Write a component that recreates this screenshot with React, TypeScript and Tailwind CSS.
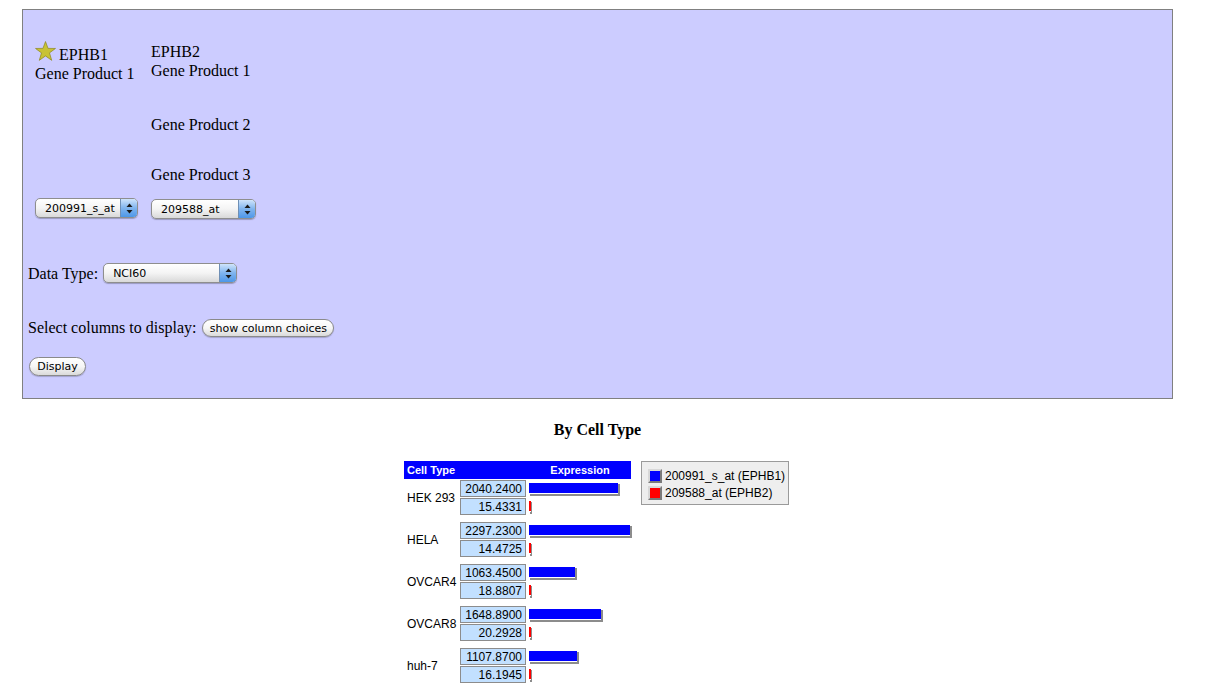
import React from "react";

const serif = { fontFamily: '"Liberation Serif", "Times New Roman", serif' };

function MacSelect({ width, label }: { width: number; label: string }) {
  return (
    <div
      className="relative flex h-[20px] items-center rounded-[5px] border border-[#8e8e8e] bg-linear-to-b from-white via-[#f4f4f4] to-[#d9d9d9] shadow-[0_1px_1px_rgba(0,0,0,0.25)]"
      style={{ width }}
    >
      <span className="pl-[9px] text-[11px] leading-none text-black" style={{ fontFamily: '"DejaVu Sans", sans-serif' }}>
        {label}
      </span>
      <div className="absolute right-0 top-0 bottom-0 flex w-[17px] items-center justify-center rounded-r-[4px] border-l border-[#6f8fb5] bg-linear-to-b from-[#cfe4fb] via-[#7fb4ee] to-[#4d97e8]">
        <svg width="7" height="11" viewBox="0 0 7 11">
          <path d="M3.5 0.5 L6.5 4 L0.5 4 Z" fill="#1a1a1a" />
          <path d="M3.5 10.5 L6.5 7 L0.5 7 Z" fill="#1a1a1a" />
        </svg>
      </div>
    </div>
  );
}

function MacButton({ label, width, className = "" }: { label: string; width: number; className?: string }) {
  return (
    <div
      className={`flex items-center justify-center rounded-full border border-[#8a8a8a] bg-linear-to-b from-white via-[#f6f6f6] to-[#dadada] text-[11px] leading-none text-black shadow-[0_1px_1px_rgba(0,0,0,0.2)] ${className}`}
      style={{ width, fontFamily: '"DejaVu Sans", sans-serif' }}
    >
      {label}
    </div>
  );
}

function Star() {
  return (
    <svg width="21" height="20" viewBox="0 0 20 19">
      <path
        d="M10 0.5 L12.4 7.0 L19.5 7.1 L13.8 11.3 L15.9 18.4 L10 14.2 L4.1 18.4 L6.2 11.3 L0.5 7.1 L7.6 7.0 Z"
        fill="#c8c235"
        stroke="#8f8a1e"
        strokeWidth="0.7"
        strokeLinejoin="round"
      />
    </svg>
  );
}

const rows = [
  { name: "HEK 293", a: "2040.2400", b: "15.4331" },
  { name: "HELA", a: "2297.2300", b: "14.4725" },
  { name: "OVCAR4", a: "1063.4500", b: "18.8807" },
  { name: "OVCAR8", a: "1648.8900", b: "20.2928" },
  { name: "huh-7", a: "1107.8700", b: "16.1945" },
];

function Bar({ value, color }: { value: number; color: string }) {
  const total = Math.round(value * 0.04484);
  const small = total < 4;
  const w = small ? 2 : total - 2;
  return (
    <div className="flex shrink-0 flex-col">
      <div className="flex">
        <div className="h-[10px] shrink-0" style={{ width: w, background: color }} />
        {small ? (
          <div className="mt-[1px] h-[10px] w-[1px] shrink-0 bg-[#8c8c8c]" />
        ) : (
          <div className="mt-[1px] h-[10px] w-[2px] shrink-0 bg-[#8c8c8c]" />
        )}
      </div>
      <div className="ml-[1px] h-[2px] bg-[#8c8c8c]" style={{ width: small ? w : w + 1 }} />
    </div>
  );
}

function ValueBox({ v }: { v: string }) {
  return (
    <div className="flex h-[17px] w-[66px] items-center justify-end border border-[#8c8c8c] bg-[#c2e0ff] pr-[3px] text-[12px] leading-none text-black">
      {v}
    </div>
  );
}

export default function App() {
  return (
    <div className="min-h-[690px] bg-white pt-[9px]">
      <div className="ml-[22px] w-[1151px]">
        {/* Query panel */}
        <div className="border border-[#808080] bg-[#ccccff] pb-[22px] text-[16px] text-black" style={serif}>
          <div className="mt-[31px] flex pl-[12px]">
            <div className="w-[116px]">
              <div className="h-[157px]">
                <div className="flex items-start">
                  <Star />
                  <span className="ml-[3px] mt-[5px] leading-[18px]">EPHB1</span>
                </div>
                <div className="leading-[19px]">Gene Product 1</div>
              </div>
              <MacSelect width={103} label="200991_s_at" />
            </div>
            <div>
              <div className="h-[157px]">
                <div className="mt-[1px] leading-[19px]">EPHB2</div>
                <div className="leading-[19px]">Gene Product 1</div>
                <div className="mt-[35px] leading-[19px]">Gene Product 2</div>
                <div className="mt-[31px] leading-[19px]">Gene Product 3</div>
              </div>
              <MacSelect width={105} label="209588_at" />
            </div>
          </div>

          <div className="mt-[44px] flex h-[20px] items-center pl-[5px]">
            <span className="leading-[19px]">Data Type:</span>
            <div className="ml-[5px]">
              <MacSelect width={134} label="NCI60" />
            </div>
          </div>

          <div className="mt-[35px] flex h-[19px] items-center pl-[5px]">
            <span className="leading-[19px]">Select columns to display:</span>
            <MacButton label="show column choices" width={132} className="ml-[6px] mt-[1px] h-[18px]" />
          </div>

          <div className="mt-[20px] pl-[6px]">
            <MacButton label="Display" width={57} className="h-[19px]" />
          </div>
        </div>

        {/* Results */}
        <div className="mt-[21px] text-center text-[16px] font-bold leading-[19px] text-black" style={serif}>
          By Cell Type
        </div>

        <div className="mt-[22px] flex justify-center pr-[2px]" style={{ fontFamily: '"Liberation Sans", Arial, sans-serif' }}>
          <div className="w-[229px]">
            <div className="flex h-[18px] w-[227px] items-center bg-[#0000ff] text-[11px] font-bold text-white">
              <span className="w-[125px] pl-[3px]">Cell Type</span>
              <span className="w-[102px] text-center">Expression</span>
            </div>
            <div className="mt-[1px] flex flex-col gap-[7px]">
              {rows.map((r) => (
                <div key={r.name} className="flex">
                  <div className="flex w-[56px] shrink-0 items-center pl-[3px] text-[12px] text-black">{r.name}</div>
                  <div className="flex shrink-0 flex-col gap-[1px]">
                    <ValueBox v={r.a} />
                    <ValueBox v={r.b} />
                  </div>
                  <div className="ml-[3px] flex flex-col gap-[1px]">
                    <div className="flex h-[17px] items-center pt-[1px]">
                      <Bar value={parseFloat(r.a)} color="#0000ff" />
                    </div>
                    <div className="flex h-[17px] items-center pt-[1px]">
                      <Bar value={parseFloat(r.b)} color="#ff0000" />
                    </div>
                  </div>
                </div>
              ))}
            </div>
          </div>

          <div className="ml-[8px] h-[44px] w-[148px] self-start border border-[#9a9a9a] bg-[#eeeeee] pl-[6px] pt-[5px] text-[12px] text-black">
            <div className="flex h-[17px] items-center">
              <div className="h-[14px] w-[14px] border-[2px] border-t-[#d8d8d8] border-l-[#d8d8d8] border-b-[#7a7a7a] border-r-[#7a7a7a] bg-[#0000ff]" />
              <span className="ml-[3px]">200991_s_at (EPHB1)</span>
            </div>
            <div className="flex h-[17px] items-center">
              <div className="h-[14px] w-[14px] border-[2px] border-t-[#d8d8d8] border-l-[#d8d8d8] border-b-[#7a7a7a] border-r-[#7a7a7a] bg-[#ff0000]" />
              <span className="ml-[3px]">209588_at (EPHB2)</span>
            </div>
          </div>
        </div>
      </div>
    </div>
  );
}
